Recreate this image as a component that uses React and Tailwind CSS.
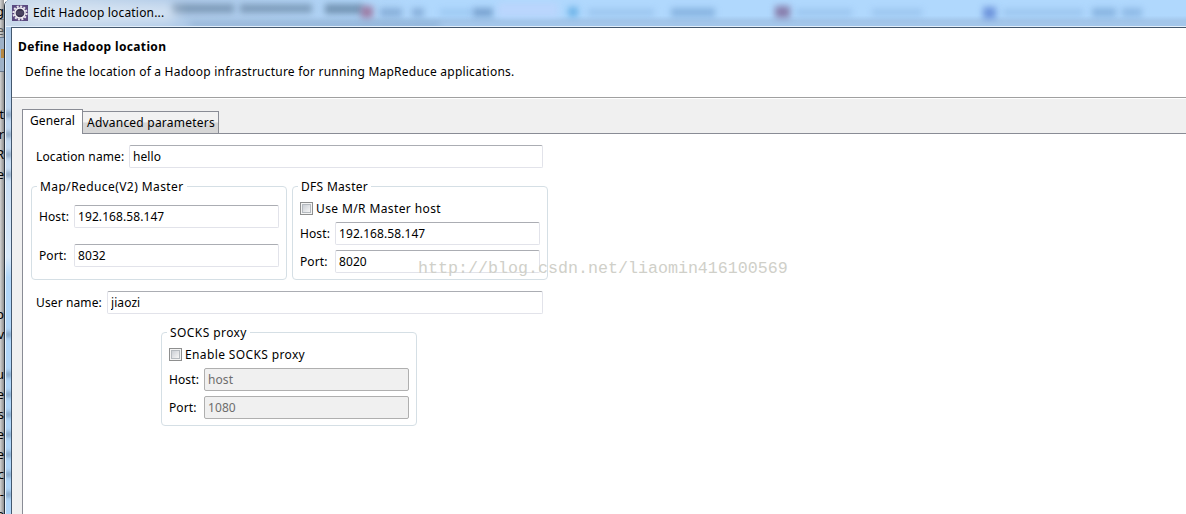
import React, { useState } from 'react';
import clsx from 'clsx';

// Code lines of the editor window that stick out on the left of the dialog
const editorLines = ['t', 'r', 'R', '.e', '', '', '', '', '', '', 'p', 'v', '', 'u', '.e', 's', 'e', 'e', 'c', '-', 'e'];

// Shapes that shine through the glass title bar
const glassSpots = [
  'left-[172px] top-[4px] w-[62px] h-[9px] bg-[#44627f]/45',
  'left-[240px] top-[4px] w-[72px] h-[9px] bg-[#44627f]/45',
  'left-[325px] top-[4px] w-[38px] h-[10px] bg-[#44627f]/55',
  'left-[190px] top-[22px] w-[250px] h-[5px] bg-[#6c90b8]/40',
  'left-[361px] top-[6px] w-[12px] h-[12px] bg-[#9a6a94]/80',
  'left-[380px] top-[8px] w-[22px] h-[9px] bg-[#6e96c4]/60',
  'left-[412px] top-[8px] w-[12px] h-[9px] bg-[#6e96c4]/60',
  'left-[440px] top-[9px] w-[32px] h-[7px] bg-[#83b4e4]/40',
  'left-[473px] top-[8px] w-[20px] h-[9px] bg-[#5c86b8]/65',
  'left-[498px] top-[3px] w-[60px] h-[14px] bg-[#bdd5fc]/80',
  'left-[568px] top-[7px] w-[10px] h-[10px] bg-[#52a5e0]/70',
  'left-[588px] top-[9px] w-[66px] h-[7px] bg-[#7da9da]/40',
  'left-[671px] top-[8px] w-[44px] h-[9px] bg-[#6e9ccf]/60',
  'left-[775px] top-[6px] w-[15px] h-[12px] bg-[#81709f]/85',
  'left-[796px] top-[9px] w-[56px] h-[7px] bg-[#7da9da]/40',
  'left-[872px] top-[9px] w-[50px] h-[7px] bg-[#7da9da]/40',
  'left-[983px] top-[7px] w-[13px] h-[12px] bg-[#587fd2]/75',
  'left-[1003px] top-[9px] w-[80px] h-[7px] bg-[#7da9da]/40',
  'left-[1092px] top-[8px] w-[24px] h-[9px] bg-[#6e9ccf]/60',
  'left-[1122px] top-[8px] w-[20px] h-[9px] bg-[#6e9ccf]/50',
];

const frameSpots = [
  'top-[112px]', 'top-[132px]', 'top-[152px]', 'top-[172px]', 'top-[332px]', 'top-[372px]',
  'top-[392px]', 'top-[412px]', 'top-[432px]', 'top-[452px]', 'top-[472px]', 'top-[492px]',
];

function GearIcon() {
  return (
    <svg width="16" height="16" viewBox="0 0 16 16" className="shrink-0">
      <rect width="16" height="16" fill="#5b4a80" />
      <circle cx="8" cy="8" r="6.6" fill="none" stroke="#e9e6ee" strokeWidth="2" strokeDasharray="2 1.45" />
      <circle cx="8" cy="8" r="5.1" fill="#3b3551" stroke="#f1eff4" strokeWidth="1.5" />
      <path d="M4.4 7h7.2M4.4 9h7.2" stroke="#5d5675" />
    </svg>
  );
}

function TextField({ value, disabled, className }) {
  const [text, setText] = useState(value);
  return (
    <input
      type="text"
      value={text}
      disabled={disabled}
      onChange={(e) => setText(e.target.value)}
      className={clsx(
        'h-[23px] rounded-[2px] border px-[3px] pb-px tracking-[0.08px] outline-none',
        disabled
          ? 'border-[#afafaf] bg-[#f0f0f0] text-[#6d6d6d]'
          : 'border-[#e2e3ea] border-t-[#abadb3] bg-white text-black',
        className
      )}
    />
  );
}

function Group({ title, titleClass, className, children }) {
  return (
    <fieldset className={clsx('relative w-[256px] h-[94px] rounded-[4px] border border-[#d5dfe5] px-[7px]', className)}>
      <span className={clsx('absolute -top-[8px] left-[5px] bg-white px-[3px] leading-4 whitespace-nowrap', titleClass)}>{title}</span>
      {children}
    </fieldset>
  );
}

function Row({ label, value, disabled, className }) {
  return (
    <div className={clsx('flex items-center', className)}>
      <label className="w-[35px] tracking-[0.1px]">{label}</label>
      <TextField value={value} disabled={disabled} className="w-[205px]" />
    </div>
  );
}

function CheckBox({ label, className }) {
  return (
    <label className="mt-[13px] flex h-4 items-center gap-[3px]">
      <span className="flex size-[13px] items-center justify-center border border-[#8e8f8f] bg-[#f4f4f4]">
        <span className="size-[9px] border border-[#b5babf] bg-linear-to-br from-[#cbcfd5] to-[#f6f6f6]" />
      </span>
      <span className={clsx('pt-[2px]', className)}>{label}</span>
    </label>
  );
}

export default function App() {
  return (
    <div className="flex h-[514px] w-[1186px] overflow-hidden bg-white font-['Noto_Sans','Noto_Sans_CJK_SC',sans-serif] text-[12px] leading-4 text-black">
      {/* editor behind the dialog */}
      <div className="flex w-[4px] shrink-0 flex-col items-end overflow-hidden bg-linear-to-r from-[#d4d4d4] to-[#8e8e8e] text-[13px]">
        <div className="h-[19px] shrink-0 leading-[23px]">g</div>
        <div className="flex h-[18px] w-full shrink-0 justify-end border-t border-[#777] leading-[20px] text-[#555]">e</div>
        <div className="h-[35px] w-full shrink-0 border-y border-[#68798e] bg-[#9eb1c7] pt-[11px]">
          <div className="ml-auto h-[9px] w-[3px] bg-[#b58743]" />
        </div>
        <div className="h-[32px] shrink-0" />
        {editorLines.map((line, i) => (
          <div key={i} className="h-5 shrink-0 leading-5">{line}</div>
        ))}
      </div>

      {/* dialog frame */}
      <div className="relative flex min-w-0 flex-1 overflow-hidden rounded-tl-[6px] border-l border-[#26313e] bg-[#b0d5f8]">
        <div className="relative w-[6px] shrink-0 overflow-hidden border-l border-white/70 bg-linear-to-b from-[#a9c7e8] via-[#d8e9fa] via-50% to-[#b0d5f8] to-54%">
          {frameSpots.map((top) => (
            <div key={top} className={clsx('absolute left-0 h-[5px] w-[5px] bg-[#53718f]/70 blur-[2px]', top)} />
          ))}
        </div>
        <div className="flex min-w-0 flex-1 flex-col">
          <div className="relative -ml-[5px] flex h-[27px] shrink-0 items-center overflow-hidden border-b border-[#e3effb] bg-linear-to-b from-[#b0d8fd] from-60% to-[#a3c6ea] to-80% pl-[6px]">
            <div className="absolute inset-y-0 left-0 w-[420px] bg-linear-to-r from-[#c9d9ea] via-[#afcae8] via-40% to-transparent" />
            <div className="absolute -left-[6px] top-0">
              {glassSpots.map((spot) => (
                <div key={spot} className={clsx('absolute blur-[3px]', spot)} />
              ))}
            </div>
            <div className="absolute left-[20px] top-[5px] h-[16px] w-[150px] bg-white/50 blur-[7px]" />
            <div className="relative flex items-center gap-[5px]">
              <GearIcon />
              <span className="tracking-[0.18px]">Edit Hadoop location...</span>
            </div>
          </div>

          <div className="flex min-h-0 flex-1 flex-col border-l border-t border-[#44586e] bg-[#f0f0f0]">
            <div className="h-[70px] shrink-0 border-b border-[#a0a0a0] bg-white pl-[6px] pt-[11px]">
              <h1 className="font-bold tracking-[0.36px]">Define Hadoop location</h1>
              <p className="mt-[9px] pl-[7px] tracking-[0.22px]">
                Define the location of a Hadoop infrastructure for running MapReduce applications.
              </p>
            </div>
            <div className="h-px shrink-0 bg-white" />

            {/* tabs */}
            <div className="ml-[10px] mt-[10px] flex h-[25px] shrink-0 items-end">
              <div className="z-10 h-[25px] w-[61px] border border-b-0 border-[#898c95] bg-white pl-[7px] pt-[3px] tracking-[0.1px]">General</div>
              <div className="-ml-px h-[23px] w-[137px] border border-b-0 border-[#898c95] bg-linear-to-b from-[#f2f2f2] from-45% to-[#d6d6d6] to-50% pl-[4px] pt-[3px] tracking-[0.22px] whitespace-nowrap">
                Advanced parameters
              </div>
            </div>
            <div className="-mt-px ml-[10px] flex-1 border-l border-t border-[#898c95] bg-white">
              <div className="mt-[11px] flex items-center pl-[13px]">
                <label className="w-[93px] tracking-[0.12px]">Location name:</label>
                <TextField value="hello" className="w-[414px]" />
              </div>

              <div className="mt-[18px] flex gap-[5px] pl-[8px]">
                <Group title="Map/Reduce(V2) Master" titleClass="tracking-[0.42px]">
                  <Row label="Host:" value="192.168.58.147" className="mt-[18px]" />
                  <Row label="Port:" value="8032" className="mt-[16px]" />
                </Group>
                <Group title="DFS Master" titleClass="tracking-[0.3px]">
                  <CheckBox label="Use M/R Master host" className="tracking-[0.39px]" />
                  <Row label="Host:" value="192.168.58.147" className="mt-[6px]" />
                  <Row label="Port:" value="8020" className="mt-[5px]" />
                </Group>
              </div>

              <div className="mt-[11px] flex items-center pl-[13px]">
                <label className="w-[71px] tracking-[0.12px]">User name:</label>
                <TextField value="jiaozi" className="w-[436px]" />
              </div>

              <Group title="SOCKS proxy" titleClass="tracking-[0.42px]" className="ml-[138px] mt-[18px]">
                <CheckBox label="Enable SOCKS proxy" className="tracking-[0.37px]" />
                <Row label="Host:" value="host" disabled className="mt-[6px]" />
                <Row label="Port:" value="1080" disabled className="mt-[5px]" />
              </Group>
            </div>
          </div>
        </div>

        {/* watermark */}
        <div className="pointer-events-none absolute left-[413px] top-[258px] font-['Liberation_Mono',monospace] text-[16.67px] leading-[22px] text-[#d0d0c9]">
          http://blog.csdn.net/liaomin416100569
        </div>
      </div>
    </div>
  );
}
